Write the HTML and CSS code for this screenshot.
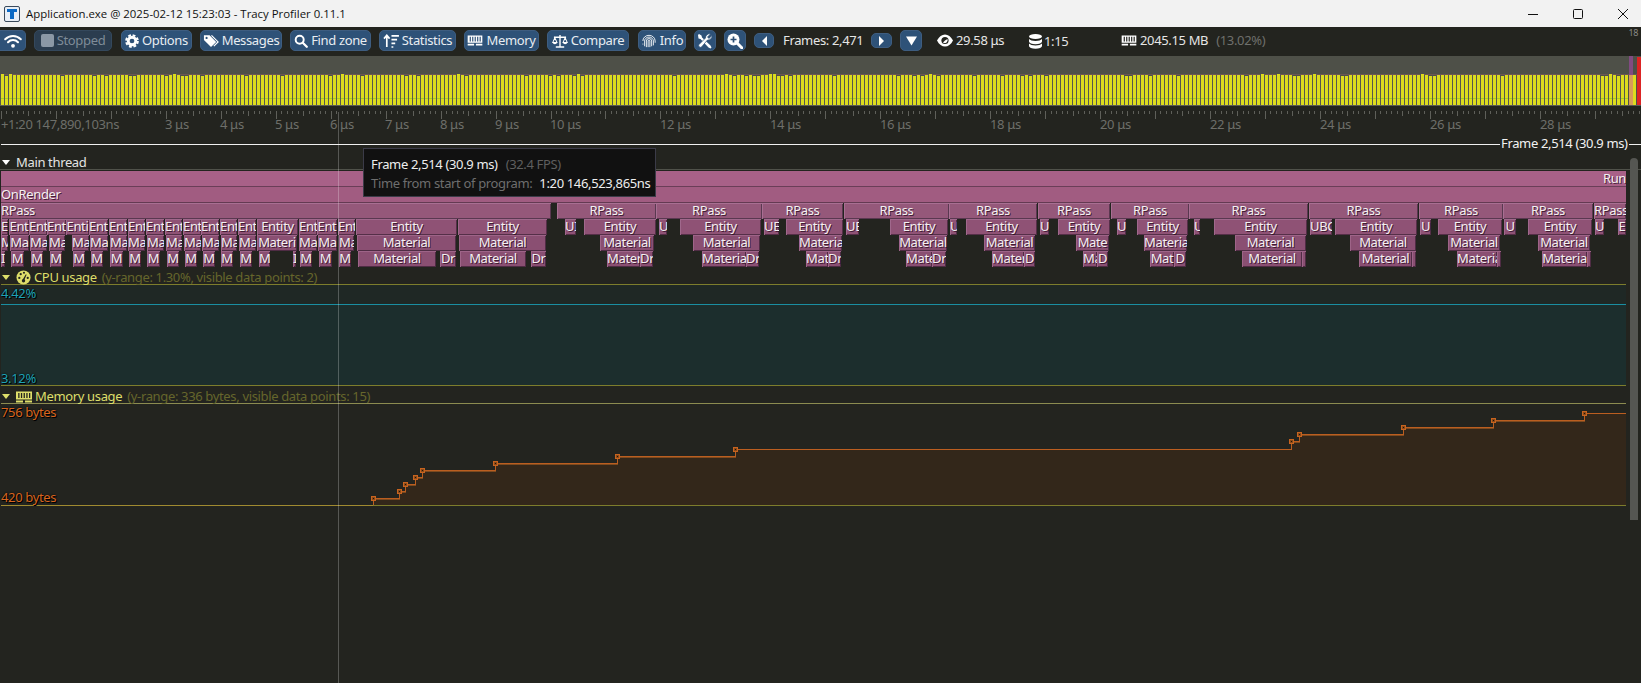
FILE: index.html
```html
<!DOCTYPE html>
<html lang="en">
<head>
<meta charset="utf-8">
<title>Tracy Profiler</title>
<link rel="stylesheet" href="styles.css">
</head>
<body>
<svg class="defs" width="0" height="0" aria-hidden="true">
  <symbol id="i-ram" viewBox="0 0 16 12">
    <path d="M0 0.500h16v8H0z M2.200 2v5h1.300V2z M4.900 2v5h1.300V2z M7.600 2v5h1.300V2z M10.300 2v5h1.300V2z M13 2v5h1.300V2z" fill-rule="evenodd"/>
    <path d="M0 9.500h7v2H0z M9 9.500h7v2H9z"/>
  </symbol>
</svg>
<header class="titlebar">
  <svg class="app-icon" viewBox="0 0 16 16"><rect x=".5" y=".5" width="15" height="15" rx="1.5" fill="#e8eef6" stroke="#3a4a5c"/><path d="M3 3h10v3H10v7H6V6H3z" fill="#0a68c4"/></svg>
  <span class="title-text">Application.exe @ 2025-02-12 15:23:03 - Tracy Profiler 0.11.1</span>
  <div class="winctl">
    <svg viewBox="0 0 10 10"><path d="M0 5.500h10" stroke="#111" fill="none"/></svg>
    <svg viewBox="0 0 10 10"><rect x=".5" y=".5" width="9" height="9" rx="1" stroke="#111" fill="none"/></svg>
    <svg viewBox="0 0 10 10"><path d="M0 0l10 10M10 0L0 10" stroke="#111" fill="none"/></svg>
  </div>
</header>

<nav class="toolbar">
  <button class="btn w-wifi"><svg class="ico wifi" viewBox="0 0 18 14"><path d="M1.200 5.200a11 11 0 0 1 15.600 0M4 8.200a7 7 0 0 1 10 0" fill="none" stroke="#fff" stroke-width="2" stroke-linecap="round"/><circle cx="9" cy="11.800" r="1.900" fill="#fff"/></svg></button>
  <button class="btn off w-stopped"><span class="stop-ico"></span><span>Stopped</span></button>
  <button class="btn w-options"><svg class="ico" viewBox="0 0 16 16"><circle cx="8" cy="8" r="4.300" fill="none" stroke="#fff" stroke-width="3.200"/><circle cx="8" cy="8" r="6.600" fill="none" stroke="#fff" stroke-width="2.400" stroke-dasharray="3.200 1.980"/></svg><span>Options</span></button>
  <button class="btn w-messages"><svg class="ico wide" viewBox="0 0 17 14"><path d="M1 1h6l7 7-5.500 5.500L1 6z M3.800 2.600a1.200 1.200 0 1 0 .01 0z" fill="#fff" fill-rule="evenodd"/><path d="M9 1l7 7-4.500 4.500" fill="none" stroke="#fff" stroke-width="1.300"/></svg><span>Messages</span></button>
  <button class="btn w-find"><svg class="ico" viewBox="0 0 16 16"><circle cx="6.500" cy="6.500" r="4.600" fill="none" stroke="#fff" stroke-width="2.200"/><path d="M10 10l4.600 4.600" stroke="#fff" stroke-width="2.600" stroke-linecap="round"/></svg><span>Find zone</span></button>
  <button class="btn w-stats"><svg class="ico wide" viewBox="0 0 17 15"><path d="M4 14V2M1 5l3-3.500L7 5" fill="none" stroke="#fff" stroke-width="1.800"/><path d="M9 2h8M9 6h6M9 10h4M9 14h2" stroke="#fff" stroke-width="1.700"/></svg><span>Statistics</span></button>
  <button class="btn w-memory"><svg class="ico wide ram"><use href="#i-ram"/></svg><span>Memory</span></button>
  <button class="btn w-compare"><svg class="ico wide" viewBox="0 0 17 15"><path d="M8.500 1v12M4 14h9M2 3.500h13" stroke="#fff" stroke-width="1.500" fill="none"/><path d="M3 4L.8 9h4.400zM14 4l-2.200 5h4.400z" fill="none" stroke="#fff" stroke-width="1.100"/><path d="M.5 9a2.600 2.600 0 0 0 5 0zM11.500 9a2.600 2.600 0 0 0 5 0z" fill="#fff"/></svg><span>Compare</span></button>
  <button class="btn w-info"><svg class="ico wide" viewBox="0 0 16 16" fill="none" stroke="#fff" stroke-width="1"><path d="M1 8a7 6.500 0 0 1 14 0v2"/><path d="M3 14V8a5 4.500 0 0 1 10 0v5"/><path d="M5 15V8a3 2.800 0 0 1 6 0v6"/><path d="M7 15V8a1 1 0 0 1 2 0v7"/><path d="M1 11v1"/></svg><span>Info</span></button>
  <button class="btn w-icon"><svg class="ico big" viewBox="0 0 16 16"><path d="M2 1l2.500 1.500.5 2L13.500 12.500l1 2-1 1-2-1L3.500 6l-2-.5L1 2z" fill="#fff"/><path d="M13.500 1L10.500 4l1.500 1.500 3-3a4 4 0 0 1-4.500 4.500L4.500 14a1.800 1.800 0 0 1-2.500-2.500L8.500 5A4 4 0 0 1 13.500 1z" fill="#fff" stroke="#2e5278" stroke-width=".7"/></svg></button>
  <button class="btn w-icon"><svg class="ico big" viewBox="0 0 16 16"><circle cx="6.500" cy="6.500" r="6" fill="#fff"/><path d="M10 10l5 5" stroke="#fff" stroke-width="3" stroke-linecap="round"/><path d="M6.500 3.500v6M3.500 6.500h6" stroke="#2d5076" stroke-width="1.700"/></svg></button>
  <button class="btn small w-arrow"><svg class="caret" viewBox="0 0 8 12"><path d="M7 0v12L1 6z" fill="#fff"/></svg></button>
  <span class="stat frames">Frames: 2,471</span>
  <button class="btn small w-arrow next"><svg class="caret" viewBox="0 0 8 12"><path d="M1 0v12l6-6z" fill="#fff"/></svg></button>
  <button class="btn w-icon down"><svg class="caret-down" viewBox="0 0 12 10"><path d="M0 0h12L6 10z" fill="#fff"/></svg></button>
  <span class="stat s-time"><svg class="ico wide eye" viewBox="0 0 16 12"><path d="M0 6c2-4 5-6 8-6s6 2 8 6c-2 4-5 6-8 6S2 10 0 6z" fill="#fff"/><circle cx="8" cy="6" r="3.600" fill="#23241f"/><path d="M6 8a3 3 0 0 0 4.500-3.500L8 6z" fill="#fff"/></svg><span>29.58 μs</span></span>
  <span class="stat s-db"><svg class="ico db" viewBox="0 0 13 15"><path d="M0 2.500a6.500 2.500 0 0 1 13 0a6.500 2.500 0 0 1-13 0zM0 5a7 3 0 0 0 13 0v2.500a6.500 2.800 0 0 1-13 0zM0 9.500a7 3 0 0 0 13 0V12a6.500 2.800 0 0 1-13 0z" fill="#fff"/></svg><span>1:15</span></span>
  <span class="stat s-ram"><svg class="ico wide ram"><use href="#i-ram"/></svg><span>2045.15 MB</span><span class="dim">(13.02%)</span></span>
  <span class="fps-tag">18</span>
</nav>

<section class="frames-strip" id="frames"></section>
<section class="ruler" id="ruler"></section>
<div class="frame-mark"><i></i><span>Frame 2,514 (30.9 ms)</span><b></b></div>

<main class="timeline">
  <div class="group-head"><span class="tri"></span><span>Main thread</span></div>
  <div class="flame" id="flame"></div>

  <div class="plot-head"><span class="tri y"></span>
    <svg class="gauge" viewBox="0 0 16 16"><circle cx="8" cy="8" r="7.500" fill="#dede6a"/><path d="M7 10.500l3.500-6 .8.500-2.800 6.500z" fill="#23241f"/><circle cx="3.500" cy="8.500" r="1.200" fill="#23241f"/><circle cx="5" cy="4.500" r="1.200" fill="#23241f"/><circle cx="8.500" cy="3" r="1.100" fill="#23241f"/><circle cx="12.500" cy="8.500" r="1.200" fill="#23241f"/><circle cx="8" cy="11.500" r="1.800" fill="#23241f"/></svg>
    <span>CPU usage</span><span class="meta">(y-range: 1.30%, visible data points: 2)</span></div>
  <div class="plot cpu">
    <div class="cpu-area"></div>
    <span class="lbl teal top">4.42%</span>
    <span class="lbl teal bottom">3.12%</span>
  </div>

  <div class="plot-head mem-head"><span class="tri y"></span>
    <svg class="yram"><use href="#i-ram"/></svg>
    <span>Memory usage</span><span class="meta">(y-range: 336 bytes, visible data points: 15)</span></div>
  <div class="plot mem">
    <svg class="mem-svg" id="memplot" viewBox="1 404 1625 102" width="1625" height="102"></svg>
    <span class="lbl orange top">756 bytes</span>
    <span class="lbl orange bottom">420 bytes</span>
  </div>

  <div class="crosshair"></div>
  <div class="scrollthumb"></div>
  <aside class="tooltip">
    <div class="tt-row"><span>Frame 2,514 (30.9 ms)</span><span class="tt-dim">(32.4 FPS)</span></div>
    <div class="tt-row tt-second"><span class="tt-muted">Time from start of program:</span><span>1:20 146,523,865ns</span></div>
  </aside>
</main>
<script src="script.js"></script>
</body>
</html>
```
FILE: styles.css
```css
* { box-sizing: border-box; }
html, body { margin: 0; height: 100%; }
body {
  width: 1641px; height: 683px; overflow: hidden;
  background: #23241f; color: #e6e6e6;
  font: 13px/1 "Noto Sans", "Open Sans", sans-serif;
  letter-spacing: -.35px;
  display: flex; flex-direction: column;
}
.defs { position: absolute; }

.titlebar {
  height: 27px; flex: none; background: #f2f2f2; color: #111;
  display: flex; align-items: center; padding-left: 4px;
  font: 11.400px "Open Sans", "Noto Sans", sans-serif;
  letter-spacing: 0;
}
.app-icon { width: 16px; height: 16px; margin-right: 6px; }
.winctl { margin-left: auto; display: flex; gap: 35px; padding-right: 13px; }
.winctl svg { width: 10px; height: 10px; display: block; }

.toolbar {
  position: relative; height: 29px; flex: none; background: #23241f;
  display: flex; align-items: center; gap: 8px; padding-bottom: 4px; padding-top: 2px;
}
.btn {
  height: 21px; padding: 0; margin: 0;
  display: flex; align-items: center; justify-content: center; gap: 3px;
  font: inherit; letter-spacing: inherit; color: #e8edf2;
  background: #2e5278; border: 1px solid #3e5d80; border-radius: 5px;
  flex: none;
}
.btn.off { background: #2b3d4f; border-color: #34485c; color: #7f8c98; }
.btn.small { height: 15px; }
.ico { width: 14px; height: 14px; flex: none; display: block; }
.ico.wide { width: 16px; height: 14px; }
.ico.ram { height: 11px; fill: #fff; }
.ico.big { width: 16px; height: 16px; }
.ico.db { width: 13px; height: 15px; }
.ico.wifi { width: 18px; height: 14px; }
.ico.eye { height: 13px; }
.stop-ico { width: 13px; height: 13px; background: #8b98a5; border-radius: 2px; }
.caret { width: 7px; height: 10px; display: block; }
.caret-down { width: 11px; height: 10px; display: block; }
.w-wifi { width: 26px; border-left: 0; border-radius: 0 5px 5px 0; }
.w-stopped { width: 78px; }
.w-options { width: 71px; margin-left: 1px; }
.w-messages { width: 82px; }
.w-find { width: 81px; }
.w-stats { width: 77px; }
.w-memory { width: 75px; }
.w-compare { width: 82px; }
.w-info { width: 48px; margin-left: 1px; }
.w-icon { width: 22px; }
.w-arrow { width: 20px; }
.next { width: 21px; }
.stat { display: flex; align-items: center; gap: 3px; color: #e6e6e6; flex: none; }
.frames { margin-left: 1px; width: 80px; white-space: nowrap; }
.s-time { position: absolute; left: 937px; top: 7px; }
.s-db { position: absolute; left: 1029px; top: 7px; gap: 2px; }
.s-ram { position: absolute; left: 1121px; top: 7px; }
.dim { color: #6f706c; margin-left: 5px; }
.fps-tag { position: absolute; right: 3px; top: 1px; font-size: 9px; color: #8a8a86; }

.frames-strip { height: 49px; flex: none; background: #4e5048; }
.frames-strip svg, .ruler svg { display: block; }

.ruler { position: relative; height: 32px; flex: none; }
.tick-label { position: absolute; top: 13px; color: #6e6f6a; white-space: nowrap; }

.frame-mark { height: 15px; flex: none; display: flex; align-items: center; padding-left: 1px; color: #f2f2f2; }
.frame-mark i { width: 1499px; height: 1px; background: #f0f0f0; }
.frame-mark b { flex: 1; height: 1px; background: #f0f0f0; }
.frame-mark span { padding: 0 1px 2px; white-space: nowrap; }

.timeline { position: relative; flex: 1; padding: 0 15px 0 1px; display: flex; flex-direction: column; }
.group-head {
  height: 18px; display: flex; align-items: center; gap: 6px; padding-top: 4px;
  border-bottom: 1px solid #50524a; color: #e4e4e4; margin-right: -15px; margin-left: -1px; padding-left: 1px;
}
.tri { width: 0; height: 0; margin-left: 1px; border: 4px solid transparent; border-top: 5px solid #fff; border-bottom: 0; flex: none; }
.tri.y { border-top-color: #dede6a; margin-left: 1px; }

.flame { position: relative; height: 96px; margin-top: 1px; flex: none; }
.zone {
  position: absolute; height: 16px; overflow: clip visible; white-space: nowrap;
  text-align: center; line-height: 15px; color: #f4f0f2;
  text-shadow: 1px 1px 0 rgba(40,10,30,.75);
  box-shadow: inset 1px 1px 0 var(--hi), inset -1px -1px 0 var(--lo);
}
.zone.left { text-align: left; }
.zone.right { text-align: right; }
.z0 { background: #a86188; --hi: #a86188; --lo: #6a3e58; box-shadow: inset 0 -1px 0 var(--lo); }
.z1 { background: #a15c81; --hi: #a15c81; --lo: #643a52; box-shadow: inset 0 -1px 0 var(--lo); }
.z2 { background: #95587a; --hi: #a86f92; --lo: #5a3850; }
.z3 { background: #8f5275; --hi: #a0688c; --lo: #552f48; }
.z4, .z5 { background: #8a4f72; --hi: #9e6488; --lo: #4f2c44; }

.plot-head {
  height: 18px; flex: none; display: flex; align-items: center; padding-top: 4px;
  border-bottom: 1px solid #7d7d2c; color: #dede6a;
}
.plot-head .tri { margin-right: 6px; }
.gauge { width: 15px; height: 15px; margin-right: 3px; flex: none; }
.yram { width: 16px; height: 12px; margin-right: 3px; fill: #dede6a; flex: none; }
.meta { margin-left: 5px; color: #66662c; }
.mem-head { border-bottom-color: #8c8c50; }

.plot { position: relative; flex: none; border-bottom: 1px solid #7d7d2c; }
.cpu { height: 101px; background: #1f2825; }
.cpu-area { position: absolute; left: 0; right: 0; top: 19px; bottom: 0; background: #1c2e2d; border-top: 1px solid #1a8ea2; }
.mem { height: 102px; }
.mem-svg { position: absolute; left: 0; top: 0; display: block; }
.lbl { position: absolute; left: 0; text-shadow: 1px 1px 0 #000, 0 0 2px #000; white-space: nowrap; }
.lbl.top { top: 2px; }
.lbl.bottom { bottom: 0; }
.teal { color: #1fa3b6; }
.orange { color: #d8651f; }
.mem .lbl.bottom { bottom: 1px; }

.crosshair { position: absolute; left: 338px; top: -40px; bottom: 0; width: 1px; background: rgba(255,255,255,.24); pointer-events: none; }
.scrollthumb { position: absolute; left: 1630px; top: 6px; width: 8px; height: 362px; border-radius: 4px 4px 0 0; background: #555652; }

.tooltip {
  position: absolute; left: 363px; top: -4px; width: 293px; height: 49px;
  background: #111; border: 1px solid #3b3b48; padding: 6px 7px 0;
  white-space: nowrap;
}
.tt-row { display: flex; gap: 8px; height: 18px; align-items: center; color: #eee; }
.tt-second { margin-top: 1px; gap: 7px; }
.tt-dim { color: #5f5f5f; }
.tt-muted { color: #6e6e6e; }
```
FILE: script.js
```js
// Frame strip
(function () {
  var NS = 'http://www.w3.org/2000/svg';
  function el(name, attrs, parent) {
    var n = document.createElementNS(NS, name);
    for (var k in attrs) n.setAttribute(k, attrs[k]);
    parent.appendChild(n);
    return n;
  }
  var strip = el('svg', { width: 1641, height: 49, viewBox: '0 56 1641 49', 'shape-rendering': 'crispEdges' }, document.getElementById('frames'));
  el('rect', { x: 0, y: 74, width: 1641, height: 1, fill: '#6d5652' }, strip);
  var seed = 7;
  for (var x = 1; x < 1629; x += 4) {
    seed = (seed * 137 + 41) % 1009;
    var d = seed % 7;
    var top = d === 0 ? 76 : d < 3 ? 75 : d === 6 && seed % 5 === 0 ? 74 : 75;
    el('rect', { x: x - 1, y: top, width: 1, height: 105 - top, fill: '#55564f' }, strip);
    el('rect', { x: x, y: top, width: 3, height: 105 - top, fill: '#dcdc1e' }, strip);
    el('rect', { x: x, y: 98, width: 3, height: 1, fill: '#a8cc22' }, strip);
  }
  el('rect', { x: 1629, y: 56, width: 4, height: 49, fill: '#8a4a8c', opacity: .85 }, strip);
  el('rect', { x: 1629, y: 75, width: 4, height: 30, fill: '#d89a5a' }, strip);
  el('rect', { x: 1633, y: 75, width: 3, height: 30, fill: '#dcdc1e' }, strip);
  el('rect', { x: 1637, y: 57, width: 4, height: 48, fill: '#dc2424' }, strip);

  // Ruler
  var ruler = document.getElementById('ruler');
  var rs = el('svg', { width: 1641, height: 16, viewBox: '0 105 1641 16', 'shape-rendering': 'crispEdges' }, ruler);
  el('rect', { x: 0, y: 105, width: 1641, height: 1, fill: '#5a5b54' }, rs);
  for (var i = 0; i < 300; i++) {
    var tx = Math.floor(1.5 + i * 5.495);
    if (tx > 1640) break;
    var h = i % 10 === 0 ? 8 : i % 5 === 0 ? 5 : 3;
    el('rect', { x: tx, y: 111, width: 1, height: h, fill: '#5f605a' }, rs);
  }
  function tick(text, left) {
    var s = document.createElement('span');
    s.className = 'tick-label';
    s.style.left = left + 'px';
    s.textContent = text;
    ruler.appendChild(s);
  }
  tick('+1:20 147,890,103ns', 1);
  [3, 4, 5, 6, 7, 8, 9, 10, 12, 14, 16, 18, 20, 22, 24, 26, 28].forEach(function (n) {
    tick(n + ' μs', Math.round(165 + (n - 3) * 54.98));
  });

  // Flame graph: [left, right, label]
  var rows = [
    [[1, 1626, 'Run', 'right']],
    [[1, 1626, 'OnRender', 'left']],
    [[1, 551, 'RPass', 'left'], [557, 656, 'RPass'], [656, 762, 'RPass'], [762, 843, 'RPass'], [844, 949, 'RPass'], [949, 1037, 'RPass'], [1038, 1110, 'RPass'], [1111, 1189, 'RPass'], [1189, 1308, 'RPass'], [1309, 1418, 'RPass'], [1419, 1503, 'RPass'], [1503, 1593, 'RPass'], [1594, 1626, 'RPass']],
    [[1, 8, 'E'], [9, 29, 'Ent'], [29, 47, 'Ent'], [47, 66, 'Ent'], [66, 89, 'Enti'], [89, 108, 'Ent'], [109, 127, 'Ent'], [128, 145, 'Ent'], [146, 164, 'Ent'], [165, 182, 'Ent'], [183, 201, 'Ent'], [201, 219, 'Ent'], [220, 237, 'Ent'], [238, 256, 'Ent'], [257, 298, 'Entity'], [299, 317, 'Ent'], [317, 337, 'Ent'], [338, 355, 'Ent'], [356, 457, 'Entity'], [458, 547, 'Entity'],
      [565, 576, 'UI'], [584, 656, 'Entity'], [659, 667, 'U'], [680, 761, 'Entity'], [764, 779, 'UE'], [786, 843, 'Entity'], [846, 859, 'UE'], [890, 948, 'Entity'], [950, 957, 'U'], [966, 1037, 'Entity'], [1040, 1049, 'U'], [1058, 1110, 'Entity'], [1117, 1126, 'U'], [1137, 1188, 'Entity'], [1194, 1200, 'U'], [1214, 1307, 'Entity'], [1310, 1332, 'UBC'], [1335, 1417, 'Entity'], [1420, 1431, 'U'], [1438, 1502, 'Entity'], [1504, 1516, 'U'], [1528, 1592, 'Entity'], [1595, 1604, 'U'], [1618, 1626, 'E']],
    [[1, 8, 'M'], [10, 29, 'Ma'], [30, 47, 'Ma'], [49, 65, 'Ma'], [72, 89, 'Ma'], [90, 108, 'Ma'], [110, 127, 'Ma'], [128, 145, 'Ma'], [147, 164, 'Ma'], [166, 182, 'Ma'], [184, 201, 'Ma'], [202, 219, 'Ma'], [221, 237, 'Ma'], [239, 256, 'Ma'], [257, 297, 'Materi'], [299, 317, 'Ma'], [318, 337, 'Ma'], [339, 354, 'Ma'], [357, 456, 'Material'], [459, 546, 'Material'],
      [600, 654, 'Material'], [693, 760, 'Material'], [799, 842, 'Materia'], [899, 947, 'Material'], [984, 1035, 'Material'], [1076, 1109, 'Mate'], [1144, 1187, 'Materia'], [1235, 1306, 'Material'], [1350, 1416, 'Material'], [1448, 1500, 'Material'], [1538, 1590, 'Material']],
    [[1, 5, 'I'], [11, 24, 'M'], [31, 43, 'M'], [50, 62, 'M'], [73, 85, 'M'], [91, 103, 'M'], [110, 123, 'M'], [129, 141, 'M'], [147, 160, 'M'], [167, 179, 'M'], [185, 197, 'M'], [203, 215, 'M'], [221, 233, 'M'], [240, 252, 'M'], [259, 270, 'M'], [293, 296, 'I'], [300, 312, 'M'], [319, 332, 'M'], [339, 351, 'M'], [358, 436, 'Material'], [440, 456, 'Dr'], [460, 526, 'Material'], [531, 546, 'Dr'],
      [607, 640, 'Mater'], [640, 653, 'Dr'], [702, 746, 'Materia'], [746, 759, 'Dr'], [806, 828, 'Mat'], [828, 841, 'Dr'], [906, 932, 'Mate'], [932, 946, 'Dr'], [992, 1024, 'Mater'], [1024, 1035, 'D'], [1083, 1097, 'Ma'], [1097, 1108, 'D'], [1150, 1174, 'Mat'], [1174, 1186, 'D'], [1242, 1302, 'Material'], [1302, 1306, ''], [1359, 1412, 'Material'], [1412, 1416, ''], [1457, 1497, 'Materia'], [1497, 1501, ''], [1542, 1587, 'Materia'], [1587, 1591, '']]
  ];
  var flame = document.getElementById('flame');
  rows.forEach(function (row, r) {
    row.forEach(function (z) {
      var d = document.createElement('div');
      d.className = 'zone z' + r + (z[3] ? ' ' + z[3] : '');
      d.style.left = (z[0] - 1) + 'px';
      d.style.top = (r * 16) + 'px';
      d.style.width = (z[1] - z[0]) + 'px';
      d.textContent = z[2];
      flame.appendChild(d);
      if (!z[3] && d.scrollWidth > d.clientWidth) d.classList.add('left');
    });
  });

  // Memory plot
  var pts = [[373, 498], [399, 491], [405, 484], [415, 477], [422, 470], [495, 463], [617, 456], [735, 449], [1291, 441], [1299, 434], [1403, 427], [1493, 420], [1584, 413]];
  var mem = document.getElementById('memplot');
  var line = 'M373.5 505', area = 'M373 505', under = '';
  pts.forEach(function (p, i) {
    var next = i + 1 < pts.length ? pts[i + 1][0] : 1626;
    line += 'V' + (p[1] + .5) + 'H' + (next + .5);
    area += 'V' + p[1] + 'H' + next;
    if (i !== 7 && i !== 12) under += 'M' + p[0] + ' ' + (p[1] + 1.5) + 'H' + (next + 1);
  });
  area += 'V505Z';
  el('path', { d: area, fill: '#33271a' }, mem);
  el('path', { d: under, fill: 'none', stroke: '#7e4a1e', 'stroke-width': 1, 'shape-rendering': 'crispEdges' }, mem);
  el('path', { d: line, fill: 'none', stroke: '#bb5e20', 'stroke-width': 1, 'shape-rendering': 'crispEdges' }, mem);
  el('rect', { x: 1, y: 505, width: 372, height: 1, fill: '#a08a30' }, mem);
  pts.forEach(function (p) {
    function sq(off, size, fill) {
      el('rect', { x: p[0] - 2 + off, y: p[1] - 2 + off, width: size, height: size, fill: fill, 'shape-rendering': 'crispEdges' }, mem);
    }
    sq(0, 5, '#c8641f');
    sq(1, 3, '#8a4a18');
    sq(2, 1, '#201008');
  });
})();
```
